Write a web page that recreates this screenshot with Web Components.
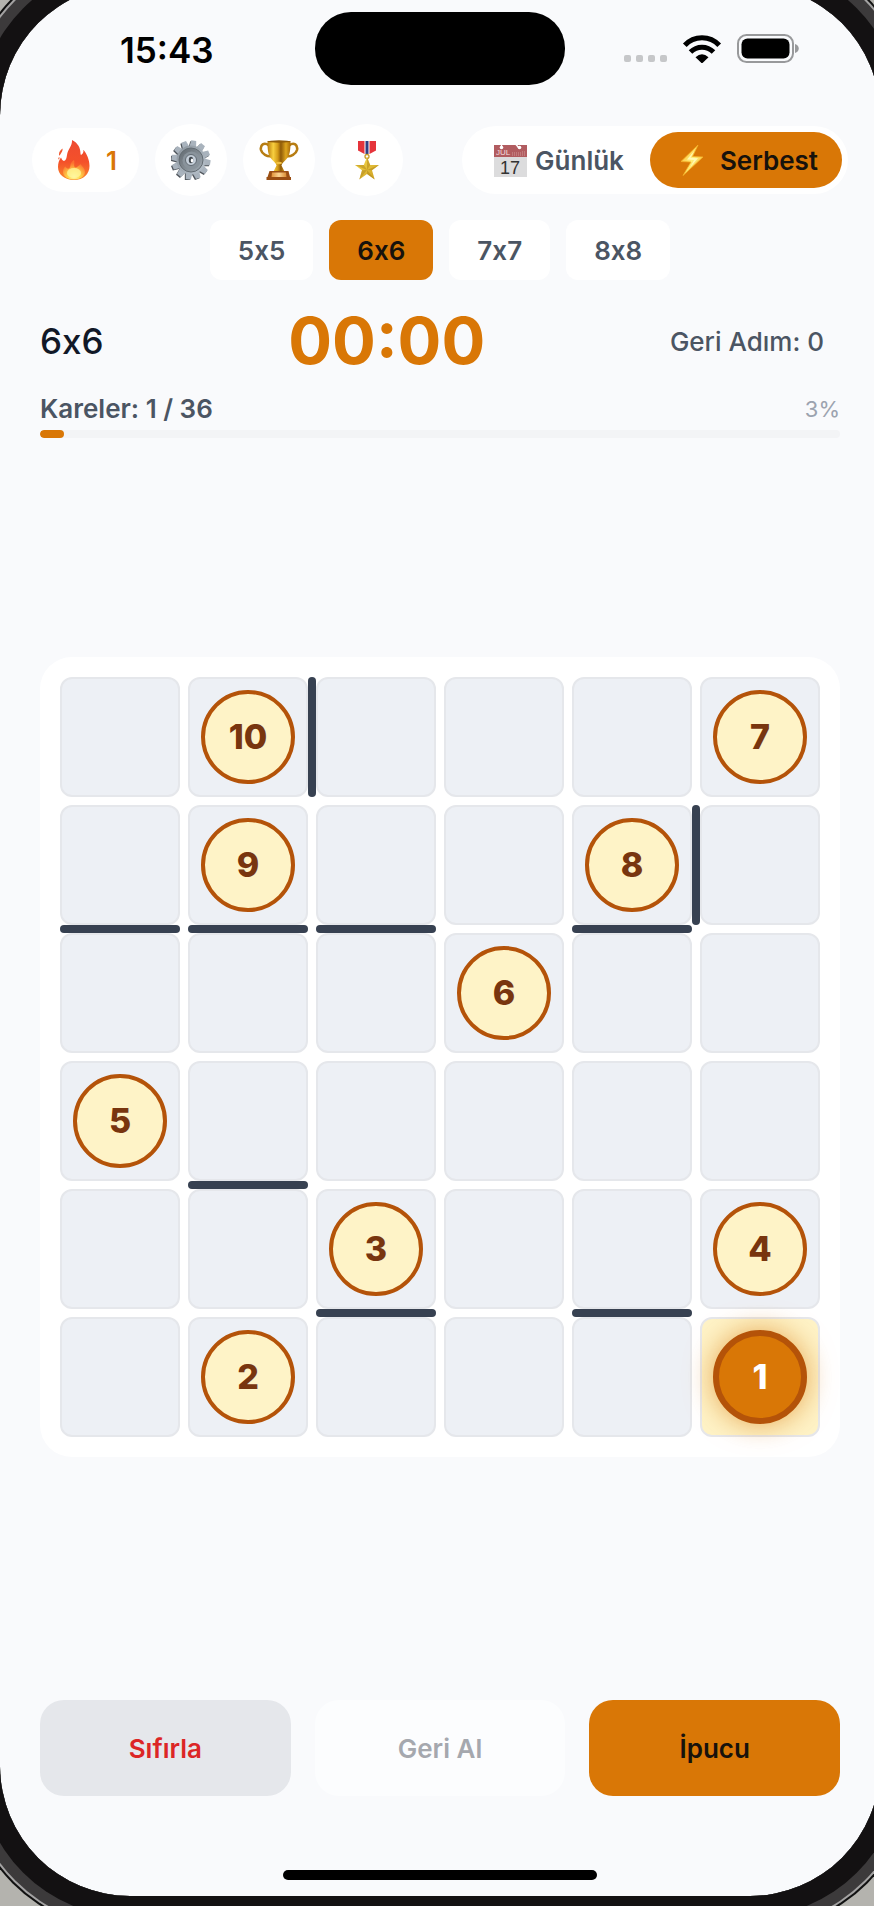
<!DOCTYPE html>
<html lang="tr">
<head>
<meta charset="UTF-8">
<meta name="viewport" content="width=device-width, initial-scale=1">
<title>6x6</title>
<style>
  body {
    margin: 0;
    background: #f9fafc;
    font-family: Inter, "Liberation Sans", sans-serif;
    --accent: #d97706;
    --accent-dark: #b45309;
    --muted: #4b5563;
    --card: #ffffff;
  }
</style>
</head>
<body>
<puzzle-app></puzzle-app>
<phone-bezel></phone-bezel>

<script>
const ICONS = {
  fire: `<svg width="34" height="40" viewBox="0 0 34 40" aria-hidden="true">
    <defs>
      <linearGradient id="f1" x1="0" y1="0" x2="0" y2="1"><stop offset="0" stop-color="#ee4a31"/><stop offset=".55" stop-color="#f4512a"/><stop offset="1" stop-color="#fb8a2c"/></linearGradient>
      <radialGradient id="f2" cx=".5" cy=".85" r=".7"><stop offset="0" stop-color="#fffbb0"/><stop offset=".4" stop-color="#ffd84a"/><stop offset="1" stop-color="#fb7030"/></radialGradient>
    </defs>
    <path fill="url(#f1)" d="M15 0c6 3 8.500 8 8.500 13.500 0 1.500 1 2 2.500-.5.500-1 .600-2 .3-3.200 3.500 4 6.200 10 6.200 16.200 0 8-6 14-15.500 14S1 34.500 1 27c0-4 1-7 3-9.500.5 1.500 1.500 3 3 3.500 2-.5 2.500-3 3-6C10.800 9 15.500 6 15 0z"/>
    <path fill="#f0572f" d="M5.500 8.500c.6 2-1 4-2.200 6-.7 1.500-1.400 1.500-1.300-.5.200-2.500 1.500-4 3.500-5.500zM2.200 17c.7 1 .2 2.200-.7 2.500C1 18.500 1.500 17.500 2.200 17z"/>
    <path fill="url(#f2)" d="M17 20c1 3-.5 5 .5 7 1.500 1.500 4-1 6-3 2 2.500 4.500 5 4.500 8 0 4.500-4.500 7.500-11 7.500S6 36.500 6 32c0-2.500 1-4.500 2.200-5.500 1 1.500 2.300 2.500 3.800 2 2.500-1.500 0-5.500 5-8.500z"/>
    <ellipse cx="17" cy="33" rx="7" ry="5" fill="#fff59a" opacity=".8"/>
  </svg>`,
  gear: () => {
    let teeth = '';
    for (let i = 0; i < 12; i++) {
      teeth += `<path transform="rotate(${i * 30 + 8} 20 20)" d="M16.500 8l1-7.500h5l1 7.500z"/>`;
    }
    return `<svg width="40" height="40" viewBox="0 0 40 40" aria-hidden="true">
      <defs>
        <linearGradient id="g1" x1="0" y1="0" x2="1" y2="1"><stop offset="0" stop-color="#8b949c"/><stop offset="1" stop-color="#b8c2cc"/></linearGradient>
        <linearGradient id="g2" x1="0" y1="0" x2="1" y2="1"><stop offset="0" stop-color="#5f676d"/><stop offset="1" stop-color="#a3adb5"/></linearGradient>
      </defs>
      <g fill="#50565c" transform="translate(-1 1)">${teeth}</g>
      <g fill="#a9b3bd">${teeth}</g>
      <circle cx="20" cy="20" r="14.500" fill="url(#g1)"/>
      <circle cx="20" cy="20" r="12" fill="url(#g2)" stroke="#646d74"/>
      <circle cx="20.500" cy="20.500" r="9" fill="#89939b"/>
      <circle cx="20" cy="20" r="5.500" fill="#c4ced8" stroke="#626b73"/>
      <ellipse cx="20" cy="20" rx="2.200" ry="3.200" fill="#41484e"/>
      <ellipse cx="21" cy="20.500" rx="1.200" ry="2" fill="#fff"/>
    </svg>`;
  },
  trophy: `<svg width="40" height="40" viewBox="0 0 40 40" aria-hidden="true">
    <defs>
      <linearGradient id="t1"><stop offset="0" stop-color="#b97b0c"/><stop offset=".25" stop-color="#f8d040"/><stop offset=".45" stop-color="#d39a17"/><stop offset=".58" stop-color="#8f5a08"/><stop offset=".8" stop-color="#dda51e"/><stop offset="1" stop-color="#a86b0a"/></linearGradient>
      <linearGradient id="t2"><stop offset="0" stop-color="#e09238"/><stop offset=".5" stop-color="#fbd594"/><stop offset="1" stop-color="#d98a31"/></linearGradient>
    </defs>
    <g fill="none" stroke="#b77d13" stroke-width="2.600">
      <path d="M10 5.500C5 1.500 1 5 2 10c1 4 6 7 11 6"/><path d="M30 5.500c5-4 9-.5 8 4.500-1 4-6 7-11 6"/>
    </g>
    <path fill="url(#t1)" d="M8.500 1c0 9 .5 14 4 18 2 2.500 4.500 4 5 6.500l-3 6h11l-3-6c.5-2.500 3-4 5-6.500 3.500-4 4-9 4-18z"/>
    <ellipse cx="20" cy="1.500" rx="11.500" ry="1.200" fill="#8f5b0b"/>
    <ellipse cx="20" cy="23" rx="3" ry="1.200" fill="#f0c040"/>
    <path fill="#9a4e13" d="M10.500 31h19l1.500 6h1v3H7.500v-3h1z"/>
    <path fill="url(#t2)" d="M13 32.500h14l.5 4.500h-15z"/>
  </svg>`,
  medal: `<svg width="26" height="40" viewBox="0 0 26 40" aria-hidden="true">
    <defs><linearGradient id="m1" x1="0" y1="0" x2="1" y2="1"><stop offset="0" stop-color="#fbe154"/><stop offset="1" stop-color="#c99a1c"/></linearGradient></defs>
    <path fill="#e5343b" d="M4 1h18v9.500L15.500 14h-5L4 10.500z"/>
    <path fill="#fff" d="M10.500 1h5v13h-5z"/><path fill="#303f83" d="M11.500 1h3v13h-3z"/>
    <circle cx="13" cy="16.500" r="2" fill="none" stroke="#c99c25" stroke-width="1.300"/>
    <path fill="url(#m1)" d="M13 17l3.200 8H25l-7 5.300 2.700 9.200L13 34l-7.700 5.500L8 30.300 1 25h8.800z"/>
    <g fill="#a87e18" opacity=".45"><path d="M13 17v13l3.200-5zM25 25l-12 5 5 .3zM20.700 39.500L13 30v4zM5.300 39.500L13 30l-5 .3zM1 25l12 5-3.200-5z"/></g>
  </svg>`,
  calendar: `<svg width="33" height="33" viewBox="0 0 33 33" aria-hidden="true">
    <path fill="#dcdcdd" d="M0 12h33v21H0z"/><path fill="#b15c60" d="M0 1h33v12H0z"/>
    <g stroke="#c07a7c"><path d="M18.500 8v4M20.500 8v4M22.500 8v4M24.500 8v4M26.500 8v4M28.500 7v5M30.500 7v5"/></g>
    <g fill="#fff"><circle cx="7.500" cy="3.500" r="1.800"/><circle cx="25.500" cy="3.500" r="1.800"/></g>
    <path stroke="#fff" stroke-width="1.400" d="M7.500 3V0M25 4l-3-3.500"/>
    <text x="2" y="11" font-size="8" fill="#f3dede">JUL</text>
    <text x="16" y="30" font-size="18" text-anchor="middle" fill="#333">17</text>
  </svg>`,
  bolt: `<svg width="24" height="32" viewBox="0 0 24 32" aria-hidden="true">
    <defs><linearGradient id="b1" x1="0" y1="0" x2="1" y2="1"><stop offset="0" stop-color="#f9a51c"/><stop offset=".5" stop-color="#fff07a"/><stop offset="1" stop-color="#f8a51c"/></linearGradient></defs>
    <path fill="url(#b1)" stroke="#f5b128" stroke-width=".8" d="M18 1L1 17.500l10 .5L3 31.500 23 13l-10.500-.5z"/>
    <path fill="#fff9b5" d="M14.500 6.500L7 15.500l7 .5-4 7.500 8-9.200-7.500-.6z"/>
  </svg>`,
  wifi: `<svg width="40" height="28" viewBox="0 0 40 28" aria-label="Wi-Fi">
    <g fill="none" stroke="#000" stroke-width="5"><path d="M2.800 10.200C12 .2 28 .2 37.200 10.200"/><path d="M8.500 17C15 10.500 25 10.500 31.500 17"/></g>
    <path d="M13.500 22.200Q20 16.500 26.500 22.200L20 28.500z"/>
  </svg>`,
  battery: `<svg width="62" height="29" viewBox="0 0 62 29" aria-label="Pil">
    <rect x="1" y="1" width="55" height="27" rx="8.500" fill="none" stroke="#98999b" stroke-width="2"/>
    <rect x="4.500" y="4.500" width="48" height="20" rx="6"/>
    <path fill="#98999b" d="M58 10c5 1.500 5 7.500 0 9z"/>
  </svg>`
};

class AppIcon extends HTMLElement {
  constructor() {
    super();
    this.attachShadow({ mode: 'open' });
  }

  connectedCallback() {
    const icon = ICONS[this.getAttribute('name')];
    this.shadowRoot.innerHTML = `
      <style>
        :host { display: flex; flex: none; }
        text { font-family: "Liberation Sans", sans-serif; font-weight: 400; }
      </style>
      ${typeof icon === 'function' ? icon() : icon}
    `;
  }
}

// Rounded phone body around the viewport, only the corners are visible
class PhoneBezel extends HTMLElement {
  constructor() {
    super();
    this.attachShadow({ mode: 'open' });
    this.shadowRoot.innerHTML = `
      <style>
        :host {
          display: block;
          position: fixed;
          inset: 0;
          overflow: hidden;
          pointer-events: none;
        }
        .frame {
          position: absolute;
          inset: -15px -6px 10px 0;
          border-radius: 130px;
          box-shadow:
            0 0 0 21px #131112,
            0 0 0 32px #3c3a3b,
            0 0 0 34px #a3a2a2,
            0 0 0 36px #111,
            0 0 0 100px #b4b3ae;
        }
      </style>
      <div class="frame"></div>
    `;
  }
}

class StatusBar extends HTMLElement {
  constructor() {
    super();
    this.attachShadow({ mode: 'open' });
    this.shadowRoot.innerHTML = `
      <style>
        :host {
          display: grid;
          grid-template-columns: 1fr 250px 1fr;
          align-items: center;
          padding: 12px 26px 0 32px;
        }
        .time {
          font-size: 35px;
          font-weight: 600;
          line-height: 40px;
          padding-left: 88px;
          padding-top: 2px;
          color: #000;
        }
        .island { height: 73px; border-radius: 36px; background: #000; }
        .right {
          display: flex;
          align-items: center;
          justify-content: flex-end;
          gap: 15px;
          padding-right: 49px;
        }
        .dots { display: flex; gap: 5px; padding-top: 20px; }
        .dots i { width: 7px; height: 7px; border-radius: 2px; background: #c6c7c9; }
      </style>
      <div class="time">15:43</div>
      <div class="island"></div>
      <div class="right">
        <div class="dots"><i></i><i></i><i></i><i></i></div>
        <app-icon name="wifi"></app-icon>
        <app-icon name="battery"></app-icon>
      </div>
    `;
  }
}

class RoundButton extends HTMLElement {
  constructor() {
    super();
    this.attachShadow({ mode: 'open' });
  }

  connectedCallback() {
    this.shadowRoot.innerHTML = `
      <style>
        :host { display: block; }
        button {
          display: flex;
          align-items: center;
          justify-content: center;
          width: 72px;
          height: 72px;
          padding: 0;
          border: 0;
          border-radius: 50%;
          background: var(--card);
          cursor: pointer;
        }
      </style>
      <button type="button" aria-label="${this.getAttribute('label')}"><slot></slot></button>
    `;
  }
}

class AppHeader extends HTMLElement {
  constructor() {
    super();
    this.attachShadow({ mode: 'open' });
    this.shadowRoot.innerHTML = `
      <style>
        :host {
          display: flex;
          align-items: center;
          justify-content: space-between;
          padding: 0 26px 0 32px;
        }
        .left { display: flex; align-items: center; gap: 16px; }
        .streak {
          display: flex;
          align-items: center;
          gap: 15px;
          height: 64px;
          padding: 0 22px 0 25px;
          border-radius: 32px;
          background: var(--card);
          color: var(--accent);
          font-size: 26px;
          font-weight: 600;
        }
        .modes {
          display: flex;
          padding: 6px;
          border-radius: 36px;
          background: var(--card);
        }
        .modes button {
          display: flex;
          align-items: center;
          gap: 8px;
          height: 56px;
          padding: 0 26px;
          border: 0;
          border-radius: 28px;
          background: none;
          color: var(--muted);
          font: 600 26px Inter, sans-serif;
          cursor: pointer;
        }
        .modes button[aria-pressed="true"] {
          gap: 16px;
          padding: 0 24px 0 30px;
          background: var(--accent);
          color: #17120c;
        }
      </style>
      <div class="left">
        <div class="streak"><app-icon name="fire"></app-icon><span>1</span></div>
        <round-button label="Ayarlar"><app-icon name="gear"></app-icon></round-button>
        <round-button label="Kupalar"><app-icon name="trophy"></app-icon></round-button>
        <round-button label="Madalyalar"><app-icon name="medal"></app-icon></round-button>
      </div>
      <div class="modes">
        <button type="button" aria-pressed="false"><app-icon name="calendar"></app-icon>Günlük</button>
        <button type="button" aria-pressed="true"><app-icon name="bolt"></app-icon>Serbest</button>
      </div>
    `;
  }
}

class SizePicker extends HTMLElement {
  constructor() {
    super();
    this.attachShadow({ mode: 'open' });
  }

  connectedCallback() {
    const current = this.getAttribute('value');
    const sizes = ['5x5', '6x6', '7x7', '8x8'];
    this.shadowRoot.innerHTML = `
      <style>
        :host {
          display: flex;
          justify-content: center;
          gap: 16px;
          padding: 0 26px 0 32px;
        }
        button {
          height: 60px;
          padding: 0 28px;
          border: 0;
          border-radius: 12px;
          background: var(--card);
          color: var(--muted);
          font: 600 26px Inter, sans-serif;
          /* keep the plain x, Inter swaps it for a multiplication sign */
          font-feature-settings: "calt" 0;
          cursor: pointer;
        }
        button[aria-pressed="true"] { background: var(--accent); color: #17120c; }
      </style>
      ${sizes.map(s => `<button type="button" aria-pressed="${s === current}">${s}</button>`).join('')}
    `;
  }
}

class GameStats extends HTMLElement {
  constructor() {
    super();
    this.attachShadow({ mode: 'open' });
    this.shadowRoot.innerHTML = `
      <style>
        :host { display: block; padding: 0 34px 0 40px; }
        .row { display: flex; align-items: center; justify-content: space-between; }
        .size {
          font-size: 35px;
          font-weight: 500;
          font-feature-settings: "calt" 0;
          color: #111827;
        }
        .timer {
          font-size: 65px;
          font-weight: 700;
          line-height: 80px;
          color: var(--accent);
        }
        .steps {
          font-size: 26px;
          font-weight: 500;
          color: var(--muted);
          padding-right: 16px;
        }
        .progress { padding-top: 13px; line-height: 30px; }
        .count { font-size: 26px; font-weight: 600; color: var(--muted); }
        .percent { font-size: 22px; color: #9ca3af; }
        .bar {
          height: 8px;
          margin-top: 6px;
          border-radius: 4px;
          background: #f3f4f6;
          overflow: hidden;
        }
        .fill { width: 3%; height: 100%; border-radius: 4px; background: var(--accent); }
      </style>
      <div class="row">
        <div class="size">6x6</div>
        <div class="timer">00:00</div>
        <div class="steps">Geri Adım: 0</div>
      </div>
      <div class="row progress">
        <div class="count">Kareler: 1 / 36</div>
        <div class="percent">3%</div>
      </div>
      <div class="bar" role="progressbar" aria-valuenow="3" aria-valuemin="0" aria-valuemax="100" aria-label="Kareler">
        <div class="fill"></div>
      </div>
    `;
  }
}

class BoardCell extends HTMLElement {
  constructor() {
    super();
    this.attachShadow({ mode: 'open' });
  }

  connectedCallback() {
    const number = this.getAttribute('number');
    const walls = (this.getAttribute('walls') || '').split(' ').filter(Boolean);
    this.shadowRoot.innerHTML = `
      <style>
        :host { display: block; position: relative; aspect-ratio: 1; }
        button {
          display: grid;
          place-items: center;
          box-sizing: border-box;
          width: 100%;
          height: 100%;
          padding: 0;
          border: 2px solid #e5e7eb;
          border-radius: 12px;
          background: #edf0f5;
          font: 800 34px Inter, sans-serif;
          color: #78350f;
          cursor: pointer;
        }
        .dot {
          display: grid;
          place-items: center;
          box-sizing: border-box;
          width: 81%;
          aspect-ratio: 1;
          border: 4px solid var(--accent-dark);
          border-radius: 50%;
          background: #fef3c7;
        }
        :host([active]) button { background: #fef3c7; }
        :host([active]) .dot {
          border-width: 6px;
          background: var(--accent);
          color: #fff;
          box-shadow: 0 0 28px rgba(217, 119, 6, .6);
        }
        /* walls sit in the gap after the cell */
        .wall { position: absolute; border-radius: 4px; background: #374151; }
        .right { top: 0; left: 100%; width: 8px; height: 100%; }
        .bottom { top: 100%; left: 0; width: 100%; height: 8px; }
      </style>
      <button type="button" aria-label="${number || 'Boş kare'}">
        ${number ? `<span class="dot">${number}</span>` : ''}
      </button>
      ${walls.map(side => `<div class="wall ${side}"></div>`).join('')}
    `;
  }
}

class PuzzleBoard extends HTMLElement {
  constructor() {
    super();
    this.attachShadow({ mode: 'open' });
  }

  connectedCallback() {
    const rows = [
      [0, 10, 0, 0, 0, 7],
      [0, 9, 0, 0, 8, 0],
      [0, 0, 0, 6, 0, 0],
      [5, 0, 0, 0, 0, 0],
      [0, 0, 3, 0, 0, 4],
      [0, 2, 0, 0, 0, 1]
    ];
    // row-column: sides
    const walls = {
      '0-1': 'right',
      '1-0': 'bottom', '1-1': 'bottom', '1-2': 'bottom', '1-4': 'bottom right',
      '3-1': 'bottom',
      '4-2': 'bottom', '4-4': 'bottom'
    };

    this.shadowRoot.innerHTML = `
      <style>
        :host {
          display: grid;
          grid-template-columns: repeat(6, 1fr);
          gap: 8px;
          padding: 20px;
          border-radius: 32px;
          background: var(--card);
        }
      </style>
    `;
    rows.forEach((row, r) => row.forEach((n, c) => {
      const cell = document.createElement('board-cell');
      if (n) cell.setAttribute('number', n);
      if (n === 1) cell.setAttribute('active', '');
      cell.setAttribute('walls', walls[`${r}-${c}`] || '');
      this.shadowRoot.appendChild(cell);
    }));
  }
}

class ActionButton extends HTMLElement {
  constructor() {
    super();
    this.attachShadow({ mode: 'open' });
  }

  connectedCallback() {
    this.shadowRoot.innerHTML = `
      <style>
        :host { display: block; flex: 1; }
        button {
          width: 100%;
          height: 96px;
          border: 0;
          border-radius: 24px;
          background: #e5e7eb;
          color: #dc2626;
          font: 600 26px Inter, sans-serif;
          cursor: pointer;
        }
        :host([kind="primary"]) button { background: var(--accent); color: #17120c; }
        :host([kind="plain"]) button { background: #fcfdfe; color: #a5a8ae; cursor: default; }
      </style>
      <button type="button" ${this.hasAttribute('disabled') ? 'disabled' : ''}><slot></slot></button>
    `;
  }
}

class PuzzleApp extends HTMLElement {
  constructor() {
    super();
    this.attachShadow({ mode: 'open' });
    this.shadowRoot.innerHTML = `
      <style>
        :host {
          display: flex;
          flex-direction: column;
          box-sizing: border-box;
          min-height: 100vh;
          padding-bottom: 26px;
        }
        app-header { margin-top: 39px; }
        size-picker { margin-top: 24px; }
        game-stats { margin-top: 21px; }
        main {
          flex: 1;
          display: grid;
          align-items: center;
          padding: 0 34px 0 40px;
        }
        .actions { display: flex; gap: 24px; padding: 24px 34px 0 40px; }
        .home {
          align-self: center;
          width: 36%;
          height: 10px;
          margin-top: 74px;
          margin-left: 6px;
          border-radius: 5px;
          background: #000;
        }
      </style>
      <status-bar></status-bar>
      <app-header></app-header>
      <size-picker value="6x6"></size-picker>
      <game-stats></game-stats>
      <main><puzzle-board></puzzle-board></main>
      <div class="actions">
        <action-button>Sıfırla</action-button>
        <action-button kind="plain" disabled>Geri Al</action-button>
        <action-button kind="primary">İpucu</action-button>
      </div>
      <div class="home"></div>
    `;
  }
}

customElements.define('app-icon', AppIcon);
customElements.define('phone-bezel', PhoneBezel);
customElements.define('status-bar', StatusBar);
customElements.define('round-button', RoundButton);
customElements.define('app-header', AppHeader);
customElements.define('size-picker', SizePicker);
customElements.define('game-stats', GameStats);
customElements.define('board-cell', BoardCell);
customElements.define('puzzle-board', PuzzleBoard);
customElements.define('action-button', ActionButton);
customElements.define('puzzle-app', PuzzleApp);
</script>
</body>
</html>
